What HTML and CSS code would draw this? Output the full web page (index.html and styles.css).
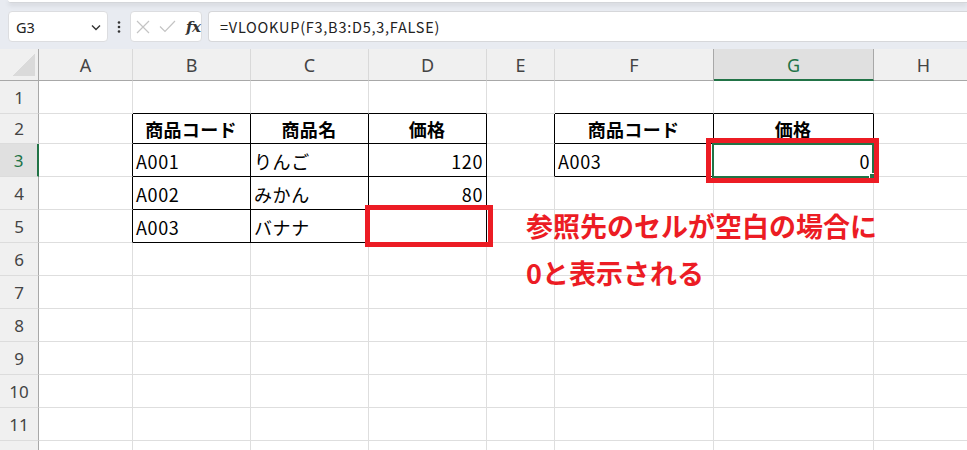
FILE: index.html
```html
<!DOCTYPE html>
<html lang="ja">
<head>
<meta charset="utf-8">
<link rel="stylesheet" href="styles.css">
</head>
<body>
<div class="app">
  <div class="toolbar">
    <div class="ribbon-edge"></div>
    <div class="fbar">
      <div class="namebox">
        <span class="name">G3</span>
        <svg class="chev" width="10" height="7" viewBox="0 0 10 7"><polyline points="1,1.5 5,5.5 9,1.5" fill="none" stroke="#333" stroke-width="1.4"/></svg>
      </div>
      <div class="dots">
        <svg width="4" height="12" viewBox="0 0 4 12"><circle cx="2" cy="1.5" r="1.3" fill="#333"/><circle cx="2" cy="6" r="1.3" fill="#333"/><circle cx="2" cy="10.5" r="1.3" fill="#333"/></svg>
      </div>
      <div class="fxbox">
        <svg class="ico" width="14" height="14" viewBox="0 0 14 14"><path d="M1 1 L13 13 M13 1 L1 13" stroke="#c4c4c4" stroke-width="1.2" fill="none"/></svg>
        <svg class="ico" width="17" height="13" viewBox="0 0 17 13"><polyline points="1,6.5 6,11.5 16,1" stroke="#c4c4c4" stroke-width="1.2" fill="none"/></svg>
        <span class="fx">fx</span>
      </div>
      <div class="formula">=VLOOKUP(F3,B3:D5,3,FALSE)</div>
    </div>
  </div>

  <div class="sheet">
    <!-- header row -->
    <div class="corner"><div class="tri"></div></div>
    <div class="ch">A</div>
    <div class="ch">B</div>
    <div class="ch">C</div>
    <div class="ch">D</div>
    <div class="ch">E</div>
    <div class="ch pre-sel">F</div>
    <div class="ch sel">G</div>
    <div class="ch">H</div>

    <!-- row 1 -->
    <div class="rh">1</div>
    <div class="c"></div>
    <div class="c bb"></div>
    <div class="c bb"></div>
    <div class="c bb"></div>
    <div class="c"></div>
    <div class="c bb"></div>
    <div class="c bb"></div>
    <div class="c"></div>

    <!-- row 2 -->
    <div class="rh">2</div>
    <div class="c br"></div>
    <div class="c t hd">商品コード</div>
    <div class="c t hd">商品名</div>
    <div class="c t hd">価格</div>
    <div class="c br"></div>
    <div class="c t hd">商品コード</div>
    <div class="c t hd">価格</div>
    <div class="c"></div>

    <!-- row 3 -->
    <div class="rh rsel">3</div>
    <div class="c br"></div>
    <div class="c t">A001</div>
    <div class="c t">りんご</div>
    <div class="c t num">120</div>
    <div class="c br"></div>
    <div class="c t">A003</div>
    <div class="c t num">0</div>
    <div class="c"></div>

    <!-- row 4 -->
    <div class="rh">4</div>
    <div class="c br"></div>
    <div class="c t">A002</div>
    <div class="c t">みかん</div>
    <div class="c t num">80</div>
    <div class="c"></div>
    <div class="c"></div>
    <div class="c"></div>
    <div class="c"></div>

    <!-- row 5 -->
    <div class="rh">5</div>
    <div class="c br"></div>
    <div class="c t">A003</div>
    <div class="c t">バナナ</div>
    <div class="c t num"></div>
    <div class="c"></div>
    <div class="c"></div>
    <div class="c"></div>
    <div class="c"></div>

    <!-- rows 6-12 -->
    <div class="rh">6</div><div class="c"></div><div class="c"></div><div class="c"></div><div class="c"></div><div class="c"></div><div class="c"></div><div class="c"></div><div class="c"></div>
    <div class="rh">7</div><div class="c"></div><div class="c"></div><div class="c"></div><div class="c"></div><div class="c"></div><div class="c"></div><div class="c"></div><div class="c"></div>
    <div class="rh">8</div><div class="c"></div><div class="c"></div><div class="c"></div><div class="c"></div><div class="c"></div><div class="c"></div><div class="c"></div><div class="c"></div>
    <div class="rh">9</div><div class="c"></div><div class="c"></div><div class="c"></div><div class="c"></div><div class="c"></div><div class="c"></div><div class="c"></div><div class="c"></div>
    <div class="rh">10</div><div class="c"></div><div class="c"></div><div class="c"></div><div class="c"></div><div class="c"></div><div class="c"></div><div class="c"></div><div class="c"></div>
    <div class="rh">11</div><div class="c"></div><div class="c"></div><div class="c"></div><div class="c"></div><div class="c"></div><div class="c"></div><div class="c"></div><div class="c"></div>
    <div class="rh"></div><div class="c"></div><div class="c"></div><div class="c"></div><div class="c"></div><div class="c"></div><div class="c"></div><div class="c"></div><div class="c"></div>

    <!-- overlays -->
    <div class="selection"><div class="handle"></div></div>
    <div class="redbox box-d5"></div>
    <div class="redbox box-g3"></div>
    <div class="note">参照先のセルが空白の場合に<br>0と表示される</div>
  </div>
</div>
</body>
</html>
```

FILE: styles.css
```css
* { box-sizing: border-box; }
html, body { margin: 0; padding: 0; }
body {
  width: 967px;
  height: 450px;
  overflow: hidden;
  background: #fff;
  font-family: "Noto Sans CJK JP", "Noto Sans", sans-serif;
}
.app { width: 967px; height: 450px; overflow: hidden; }

.toolbar {
  height: 49px;
  background: #e8ebf1;
  overflow: hidden;
}
.ribbon-edge {
  margin-left: 8px;
  height: 3px;
  background: #fff;
  border-bottom: 1px solid #d4d6da;
  border-bottom-left-radius: 6px;
  box-shadow: 0 2px 5px rgba(0,0,0,0.12);
}
.fbar {
  display: flex;
  align-items: stretch;
  height: 31px;
  margin-top: 8px;
  padding-left: 8px;
}
.namebox {
  width: 100px;
  background: #fff;
  border: 1px solid #dcdde0;
  border-radius: 4px;
  display: flex;
  align-items: center;
  justify-content: space-between;
  padding: 0 6px 0 7px;
}
.name {
  font-family: "Noto Sans", "Open Sans", sans-serif;
  font-size: 14.5px;
  color: #222;
  padding-top: 1px;
}
.chev { margin-top: 1px; }
.dots {
  width: 22px;
  display: flex;
  align-items: center;
  justify-content: center;
}
.fxbox {
  width: 72px;
  background: #fff;
  border: 1px solid #dcdde0;
  border-radius: 4px;
  display: flex;
  align-items: center;
  padding-left: 5px;
  gap: 9px;
}
.fx {
  font-family: "DejaVu Serif", "Liberation Serif", serif;
  font-style: italic;
  font-weight: bold;
  font-size: 15px;
  color: #333;
  margin-left: 1px;
  letter-spacing: -0.5px;
}
.formula {
  flex: 1;
  margin-left: 6px;
  background: #fff;
  border: 1px solid #d6d7da;
  border-right: none;
  border-radius: 4px 0 0 4px;
  display: flex;
  align-items: center;
  padding-left: 11px;
  font-size: 14.5px;
  letter-spacing: 0.75px;
  color: #222;
}

.sheet {
  position: relative;
  display: grid;
  grid-template-columns: 39px 94px 118px 118px 118px 68px 159px 160px 100px;
  grid-template-rows: 32px 33px 30px repeat(10, 33px);
  width: 974px;
}
.corner {
  background: #f0f0f0;
  border-right: 1px solid #a8a8a8;
  border-bottom: 1px solid #a8a8a8;
  display: flex;
  align-items: flex-end;
  justify-content: flex-end;
  padding: 0 3px 4px 0;
}
.tri {
  width: 23px;
  height: 23px;
  background: linear-gradient(to bottom right, transparent 50%, #dadada 50%);
}
.ch {
  background: #f0f0f0;
  border-right: 1px solid #d9d9d9;
  border-bottom: 1px solid #a8a8a8;
  display: flex;
  align-items: center;
  justify-content: center;
  font-family: "Noto Sans", "Open Sans", sans-serif;
  font-size: 18px;
  color: #444;
  padding-top: 1px;
}
.ch.pre-sel { border-right-color: #a8a8a8; }
.ch.sel {
  background: #e0e0e0;
  color: #217346;
  border-right-color: #a8a8a8;
  border-bottom: 2px solid #217346;
  padding-top: 2px;
}
.rh {
  background: #f0f0f0;
  border-right: 1px solid #a8a8a8;
  border-bottom: 1px solid #dcdcdc;
  display: flex;
  align-items: center;
  justify-content: center;
  font-family: "Noto Sans", "Open Sans", sans-serif;
  font-size: 17px;
  color: #444;
}
.rh.rsel {
  background: #e0e0e0;
  color: #217346;
  border-right: 2px solid #217346;
}
.c {
  border-right: 1px solid #dedede;
  border-bottom: 1px solid #dedede;
  display: flex;
  align-items: center;
  font-size: 18px;
  color: #000;
  white-space: nowrap;
  overflow: hidden;
}
.c.t {
  border-right-color: #000;
  border-bottom-color: #000;
  padding: 1px 4px 0 3px;
  letter-spacing: 0.6px;
}
.c.hd {
  justify-content: center;
  font-weight: bold;
  letter-spacing: 0.3px;
}
.c.num { justify-content: flex-end; padding-right: 3px; }
.c.br { border-right-color: #000; }
.c.bb { border-bottom-color: #000; }

.selection {
  position: absolute;
  left: 712px;
  top: 94px;
  width: 162px;
  height: 35px;
  border: 2px solid #217346;
}
.handle {
  position: absolute;
  right: -3px;
  bottom: -3px;
  width: 6px;
  height: 6px;
  background: #217346;
  border: 1px solid #fff;
}
.redbox {
  position: absolute;
  border: 5px solid #ec1c24;
}
.box-d5 { left: 365px; top: 156px; width: 128px; height: 42px; }
.box-g3 { left: 706px; top: 89px; width: 173px; height: 45px; }
.note {
  position: absolute;
  left: 526px;
  top: 153px;
  font-size: 27px;
  font-weight: bold;
  line-height: 47px;
  color: #ec1c24;
  white-space: nowrap;
}
```
